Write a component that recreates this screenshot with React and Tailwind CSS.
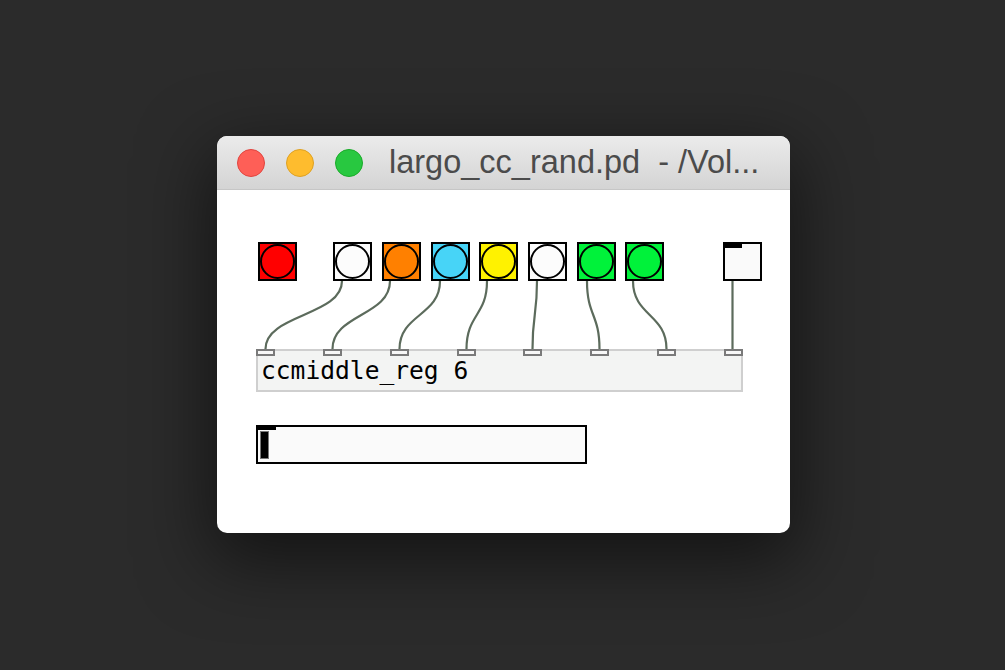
import React from "react";

const toggles = [
  { bg: "bg-[#ff0000]", ml: "ml-0" },
  { bg: "bg-[#fcfcfc]", ml: "ml-[36px]" },
  { bg: "bg-[#ff8000]", ml: "ml-[10px]" },
  { bg: "bg-[#47d4f7]", ml: "ml-[10px]" },
  { bg: "bg-[#fff200]", ml: "ml-[9px]" },
  { bg: "bg-[#fcfcfc]", ml: "ml-[10px]" },
  { bg: "bg-[#00f23a]", ml: "ml-[10px]" },
  { bg: "bg-[#00f23a]", ml: "ml-[9px]" },
];

const cables = [
  [125, 48.5],
  [173, 115.5],
  [223, 182.5],
  [270, 249.5],
  [320, 315.5],
  [370, 382.5],
  [416, 449.5],
  [515.5, 515.5],
];

function Bang({ bg, ml }) {
  return (
    <div
      className={`${ml} w-[39px] h-[39px] border-2 border-black ${bg} flex items-center justify-center shrink-0`}
    >
      <div className="w-[35px] h-[35px] rounded-full border-2 border-black shrink-0" />
    </div>
  );
}

export default function App() {
  return (
    <div className="w-[1005px] h-[670px] bg-[#2b2b2b] pt-[136px] pl-[217px]">
      <div className="w-[573px] h-[397px] rounded-[10px] bg-white overflow-hidden shadow-[0_22px_70px_6px_rgba(0,0,0,0.55)] flex flex-col">
        {/* title bar */}
        <div className="h-[54px] shrink-0 bg-gradient-to-b from-[#ebebeb] to-[#d4d4d4] border-b border-[#c6c6c6] flex items-center pl-[20px]">
          <div className="w-[28px] h-[28px] rounded-full bg-[#fe5f57] border border-[#e0443e]" />
          <div className="ml-[21px] w-[28px] h-[28px] rounded-full bg-[#febc2e] border border-[#dea123]" />
          <div className="ml-[21px] w-[28px] h-[28px] rounded-full bg-[#28c840] border border-[#1aab29]" />
          <div
            className="ml-[26px] text-[32.5px] leading-none text-[#4b4b4b] whitespace-pre"
            style={{ fontFamily: '"Liberation Sans", Arial, sans-serif' }}
          >
            largo_cc_rand.pd  - /Vol...
          </div>
        </div>

        {/* canvas */}
        <div className="relative flex-1 pt-[52px] pl-[39px]">
          <div className="flex items-start pl-[2px]">
            {toggles.map((t, i) => (
              <Bang key={i} bg={t.bg} ml={t.ml} />
            ))}
            <div className="ml-[59px] w-[39px] h-[39px] border-2 border-black bg-[#fafafa] relative shrink-0">
              <div className="absolute top-0 left-0 w-[17px] h-[4px] bg-black" />
            </div>
          </div>

          {/* object box */}
          <div className="relative mt-[68px] w-[487px] h-[43px] border-2 border-[#cfcfcf] bg-[#f3f4f3]">
            <div className="absolute -top-[2px] -left-[2px] w-[487px] flex justify-between">
              {cables.map((_, i) => (
                <div
                  key={i}
                  className="w-[19px] h-[7px] border-2 border-[#7a7a7a] bg-[#f7f7f7]"
                />
              ))}
            </div>
            <div
              className="pl-[3px] pt-[6px] text-[24.6px] leading-[28px] text-black whitespace-pre"
              style={{ fontFamily: '"DejaVu Sans Mono", monospace' }}
            >
              ccmiddle_reg 6
            </div>
          </div>

          {/* slider */}
          <div className="relative mt-[33px] w-[331px] h-[39px] border-2 border-black bg-[#fafafa]">
            <div className="absolute top-0 left-0 w-[18px] h-[3px] bg-black" />
            <div className="absolute top-[4px] left-[2px] w-[9px] h-[28px] bg-black border border-[#777]" />
          </div>

          {/* cables */}
          <svg
            className="absolute inset-0 pointer-events-none"
            width="573"
            height="343"
            viewBox="0 0 573 343"
          >
            {cables.map(([x1, x2], i) => (
              <path
                key={i}
                d={`M ${x1} 91 C ${x1} 126, ${x2} 124, ${x2} 159`}
                fill="none"
                stroke="#5c6b5c"
                strokeWidth="2.2"
              />
            ))}
          </svg>
        </div>
      </div>
    </div>
  );
}
